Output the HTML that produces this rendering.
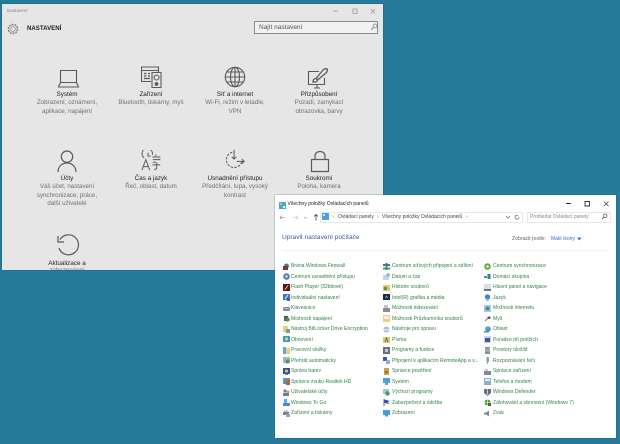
<!DOCTYPE html>
<html lang="cs"><head><meta charset="utf-8"><title>Nastavení</title>
<style>
html,body{margin:0;padding:0}
body{width:620px;height:444px;overflow:hidden;position:relative;background:#267a9a;font-family:"Liberation Sans",sans-serif}
div,span,svg{position:absolute}
#s{left:2px;top:4px;width:381px;height:266px;background:#e6e6e6;overflow:hidden;box-shadow:0 0 1px #14506a;filter:blur(.2px)}
.t{white-space:nowrap;text-align:center;width:84px;font-size:6.3px;line-height:9px;color:#222}
.d{white-space:pre;text-align:center;width:84px;font-size:6.2px;line-height:8.6px;color:#707070}
.i{fill:none;stroke:#5a5a5a;stroke-width:1.1}
#c{left:275px;top:195px;width:341px;height:243px;background:#fff;overflow:hidden;box-shadow:0 0 1px #14506a;filter:blur(.2px)}
.l{white-space:nowrap;font-size:5.05px;line-height:8px;color:#2f8348}
.ic{width:7px;height:7px}
</style></head><body>
<div id="s">
<div style="left:5px;top:3px;font-size:4.6px;line-height:8px;color:#8a8a8a">Nastavení</div>
<svg style="left:328px;top:2px;width:50px;height:10px" viewBox="0 0 50 10"><path d="M3 5h5M23 3h4v4.500h-4zM41 3l4 4.500M45 3l-4 4.500" fill="none" stroke="#9a9a9a" stroke-width=".8"/></svg>
<svg style="left:3.500px;top:18px;width:14px;height:14px" viewBox="0 0 14 14"><circle cx="7" cy="7" r="2.300" fill="none" stroke="#777" stroke-width=".6"/><circle cx="7" cy="7" r="4.800" fill="none" stroke="#777" stroke-width="1" stroke-dasharray="1.800 1.200"/><circle cx="7" cy="7" r="4" fill="none" stroke="#888" stroke-width=".5"/></svg>
<div style="left:25px;top:19.500px;font-size:6.100px;line-height:10px;font-weight:bold;color:#222">NASTAVENÍ</div>
<div style="left:252px;top:17px;width:122px;height:11px;background:#f1f1f1;border:1px solid #8a8a8a"></div>
<div style="left:257px;top:19px;font-size:6.500px;line-height:9px;color:#555">Najít nastavení</div>
<svg style="left:368px;top:19px;width:8px;height:8px" viewBox="0 0 8 8"><circle cx="5" cy="3" r="2" fill="none" stroke="#777" stroke-width=".7"/><path d="M3.500 4.500L1 7" stroke="#777" stroke-width=".8"/></svg>

<svg class="i" style="left:55px;top:65px;width:24px;height:22px" viewBox="0 0 24 22"><path d="M3.500 1.500h16v12h-16zM3.500 13.500L1.500 18h20l-2-4.500"/></svg>
<div class="t" style="left:23px;top:86px">Systém</div>
<div class="d" style="left:23px;top:95px">Zobrazení, oznámení,
aplikace, napájení</div>

<svg class="i" style="left:139px;top:62px;width:22px;height:23px" viewBox="0 0 22 23"><path d="M10 15.500H.5V1h17v5M.5 4.500h17M11 6.500h9v15h-9z"/><circle cx="15.500" cy="11.500" r="2.500"/><circle cx="15.500" cy="18" r="1.300" fill="#5a5a5a"/><path d="M3 7.500h2.500M7 7.500h2M3 10h2.500M7 10h2M3 12.500h6" stroke-width="1.200"/></svg>
<div class="t" style="left:107px;top:86px">Zařízení</div>
<div class="d" style="left:97px;top:95px;width:104px">Bluetooth, tiskárny, myš</div>

<svg class="i" style="left:221px;top:60.500px;width:24px;height:24px" viewBox="0 0 24 24"><circle cx="12" cy="12" r="9.700"/><ellipse cx="12" cy="12" rx="4.500" ry="9.700"/><path d="M12 2.300v19.400M2.300 12h19.400M3.800 7h16.400M3.800 17h16.400"/></svg>
<div class="t" style="left:191px;top:86px">Síť a internet</div>
<div class="d" style="left:191px;top:95px">Wi-Fi, režim v letadle,
VPN</div>

<svg class="i" style="left:304px;top:63px;width:24px;height:24px" viewBox="0 0 24 24"><path d="M13 4.500H2.500v13h16V11M8 21h6M11 17.500V21"/><path d="M7 15c0-3 2-3.500 3-3.500l1.500 1.500c0 1-1 2.500-4.500 2zM10 11.500L17 3c1-1 3-2 4-1s0 3-1 4l-8.500 7" stroke-width="1.300"/></svg>
<div class="t" style="left:275px;top:86px">Přizpůsobení</div>
<div class="d" style="left:275px;top:95px">Pozadí, zamykací
obrazovka, barvy</div>

<svg class="i" style="left:55px;top:146px;width:20px;height:24px" viewBox="0 0 20 24"><circle cx="10" cy="6.700" r="5.700" stroke-width="1.200"/><path d="M1 22c0-5 3.500-9 9-9s9 4 9 9" stroke-width="1.200"/></svg>
<div class="t" style="left:23px;top:170px">Účty</div>
<div class="d" style="left:23px;top:179px">Váš účet, nastavení
synchronizace, práce,
další uživatelé</div>

<svg class="i" style="left:139px;top:146px;width:21px;height:21px" viewBox="0 0 24 24"><path d="M3.500 9A6 6 0 1 1 13 5.500"/><path d="M8 3v4h3M1 23L5.500 11 10 23M2.500 19h6M13 8h9M17 5v2M13.500 11h8v-1M17 14h-3.500M13 17h9M18 14v6c0 2-1 2-3 2"/></svg>
<div class="t" style="left:107px;top:170px">Čas a jazyk</div>
<div class="d" style="left:107px;top:179px">Řeč, oblast, datum</div>

<svg class="i" style="left:222px;top:145px;width:22px;height:22px" viewBox="0 0 24 22"><path d="M9 2.500A8.500 8.500 0 1 0 19.500 12" stroke-dasharray="2.600 1.500"/><path d="M11 0v10M8.500 7.500L11 10l2.500-2.500M14 12.500h8M19.500 10l2.500 2.500-2.500 2.500"/></svg>
<div class="t" style="left:191px;top:170px">Usnadnění přístupu</div>
<div class="d" style="left:191px;top:179px">Předčítání, lupa, vysoký
kontrast</div>

<svg class="i" style="left:308px;top:145.500px;width:20px;height:23px" viewBox="0 0 20 23"><path d="M1.500 9.500h17v12h-17zM5 9.500V6c0-6 10-6 10 0v3.500" stroke-width="1.200"/></svg>
<div class="t" style="left:275px;top:170px">Soukromí</div>
<div class="d" style="left:275px;top:179px">Poloha, kamera</div>

<svg class="i" style="left:54px;top:229px;width:24px;height:24px" viewBox="0 0 24 24"><path d="M4 6.500A10 10 0 1 1 3 15" stroke-width="1.200"/><path d="M2 3v6h6" stroke-width="1.200"/></svg>
<div class="t" style="left:23px;top:255px">Aktualizace a</div>
<div class="d" style="left:23px;top:263px">zabezpečení</div>
</div>

<div id="c">
<svg style="left:4px;top:7px;width:7px;height:7px" viewBox="0 0 7 7"><rect width="7" height="7" fill="#4aa3d8"/><rect x="1" y="1" width="2" height="2" fill="#e8c35a"/><rect x="4" y="4" width="2" height="2" fill="#e8f4fb"/></svg>
<div style="left:12.500px;top:4.500px;font-size:5.050px;line-height:9px;color:#222">Všechny položky Ovládacích panelů</div>
<svg style="left:288px;top:4px;width:50px;height:9px" viewBox="0 0 50 9"><path d="M3 4.500h5M22 2.500h4.500V7H22z" fill="none" stroke="#333" stroke-width=".9"/><path d="M41 2.500L45.500 7M45.500 2.500L41 7" stroke="#444" stroke-width=".8"/></svg>
<svg style="left:4px;top:17.500px;width:44px;height:9px" viewBox="0 0 44 9"><path d="M1 4.500h5M3 2.500L1 4.500l2 2" fill="none" stroke="#999" stroke-width=".8"/><path d="M14 4.500h5M17 2.500l2 2-2 2" fill="none" stroke="#ccc" stroke-width=".8"/><path d="M25 4l1.500 1.500L28 4" fill="none" stroke="#aaa" stroke-width=".7"/><path d="M37 7.500v-6M35 3.500l2-2 2 2" fill="none" stroke="#444" stroke-width=".8"/></svg>
<div style="left:45px;top:17px;width:201px;height:9px;border:1px solid #e8e8e8"></div>
<svg style="left:47px;top:18px;width:7px;height:7px" viewBox="0 0 7 7"><rect width="7" height="7" fill="#4aa3d8"/><rect x="1" y="1" width="2" height="2" fill="#cfe8f7"/></svg>
<div style="left:57px;top:17.500px;font-size:5px;line-height:9px;color:#777">›</div>
<div style="left:63px;top:17.500px;font-size:5px;line-height:9px;color:#444;white-space:nowrap">Ovládací panely</div>
<div style="left:102px;top:17.500px;font-size:5px;line-height:9px;color:#777">›</div>
<div style="left:107px;top:17.500px;font-size:5px;line-height:9px;color:#444;white-space:nowrap">Všechny položky Ovládacích panelů</div>
<div style="left:191px;top:17.500px;font-size:5px;line-height:9px;color:#777">›</div>
<svg style="left:230px;top:18px;width:16px;height:8px" viewBox="0 0 16 8"><path d="M1 3l2 2 2-2" fill="none" stroke="#666" stroke-width=".7"/><path d="M13 2.500A2 2 0 1 0 14 4" fill="none" stroke="#666" stroke-width=".7"/></svg>
<div style="left:252px;top:17px;width:82px;height:9px;border:1px solid #e8e8e8"></div>
<div style="left:255px;top:17.500px;font-size:5px;line-height:9px;color:#888;white-space:nowrap">Prohledat Ovládací panely</div>
<svg style="left:326px;top:18px;width:7px;height:7px" viewBox="0 0 7 7"><circle cx="4.200" cy="2.800" r="1.800" fill="none" stroke="#555" stroke-width=".7"/><path d="M3 4L1 6" stroke="#555" stroke-width=".8"/></svg>
<div style="left:7px;top:38px;font-size:6.550px;line-height:10px;color:#3a5aa8;white-space:nowrap">Upravit nastavení počítače</div>
<div style="left:237px;top:39.500px;font-size:5.150px;line-height:9px;color:#666;white-space:nowrap">Zobrazit podle:</div>
<div style="left:276px;top:39.500px;font-size:5px;line-height:9px;color:#2f72d4;white-space:nowrap">Malé ikony</div>
<svg style="left:302px;top:42px;width:5px;height:4px" viewBox="0 0 5 4"><path d="M0 .5h4.500L2.200 3.500z" fill="#2f78c4"/></svg>
<div style="left:7px;top:55px;width:328px;height:1px;background:#eef0f4"></div>

<svg class="ic" style="left:8px;top:67.500px" viewBox="0 0 7 7"><circle cx="3.500" cy="3" r="2.500" fill="#3f78b4"/><rect y="3" width="5" height="4" fill="#7a3b20"/></svg><div class="l" style="left:16px;top:67px">Brána Windows Firewall</div>
<svg class="ic" style="left:8px;top:78px" viewBox="0 0 7 7"><circle cx="3.500" cy="3.500" r="3.300" fill="#4c7fc4"/><circle cx="3.500" cy="3.500" r="1.200" fill="#d9e6f5"/></svg><div class="l" style="left:16px;top:77.500px">Centrum usnadnění přístupu</div>
<svg class="ic" style="left:8px;top:88.500px" viewBox="0 0 7 7"><rect width="7" height="7" fill="#5a1014"/><path d="M1.500 5.500C3.500 5.500 3.500 1.500 5.500 1.500" stroke="#eee" fill="none" stroke-width=".8"/></svg><div class="l" style="left:16px;top:88px">Flash Player (32bitové)</div>
<svg class="ic" style="left:8px;top:99px" viewBox="0 0 7 7"><rect width="7" height="6" fill="#3a78c8"/><path d="M2 5l3-4" stroke="#fff" stroke-width=".8"/><rect x="4" y="4" width="3" height="3" fill="#7a3fa0"/></svg><div class="l" style="left:16px;top:98.500px">Individuální nastavení</div>
<svg class="ic" style="left:8px;top:109.500px" viewBox="0 0 7 7"><rect y="2" width="7" height="4" rx="1" fill="#8a8f96"/><path d="M1 3.500h5" stroke="#dde" stroke-width=".5"/></svg><div class="l" style="left:16px;top:109px">Klávesnice</div>
<svg class="ic" style="left:8px;top:120px" viewBox="0 0 7 7"><rect x="1" y="1" width="4" height="5" fill="#555"/><circle cx="4.500" cy="4.500" r="2.200" fill="#4c9a3c"/></svg><div class="l" style="left:16px;top:119.500px">Možnosti napájení</div>
<svg class="ic" style="left:8px;top:130.500px" viewBox="0 0 7 7"><rect width="5" height="6" fill="#e8cf7c"/><rect x="3" y="3" width="4" height="4" fill="#8a94a8"/></svg><div class="l" style="left:16px;top:130px">Nástroj BitLocker Drive Encryption</div>
<svg class="ic" style="left:8px;top:141px" viewBox="0 0 7 7"><rect width="7" height="6" rx="1" fill="#3f8fc4"/><circle cx="3.500" cy="3" r="1.700" fill="#a8d8a0"/></svg><div class="l" style="left:16px;top:140.500px">Obnovení</div>
<svg class="ic" style="left:8px;top:151.500px" viewBox="0 0 7 7"><rect y="1" width="7" height="6" fill="#f0d070"/><rect width="3" height="7" fill="#5ea8dc"/></svg><div class="l" style="left:16px;top:151px">Pracovní složky</div>
<svg class="ic" style="left:8px;top:162px" viewBox="0 0 7 7"><rect width="7" height="6" fill="#a9b3bb"/><circle cx="4.500" cy="4.500" r="2" fill="#46a04a"/></svg><div class="l" style="left:16px;top:161.500px">Přehrát automaticky</div>
<svg class="ic" style="left:8px;top:172.500px" viewBox="0 0 7 7"><rect width="7" height="6" fill="#3c4aa0"/><circle cx="3.500" cy="3" r="1.500" fill="#e8d060"/><rect x="2" y="6" width="3" height="1" fill="#888"/></svg><div class="l" style="left:16px;top:172px">Správa barev</div>
<svg class="ic" style="left:8px;top:183px" viewBox="0 0 7 7"><rect width="7" height="6" fill="#5a94c8"/><rect x="3" y="2" width="4" height="5" fill="#c06030"/></svg><div class="l" style="left:16px;top:182.500px">Správce zvuku Realtek HD</div>
<svg class="ic" style="left:8px;top:193.500px" viewBox="0 0 7 7"><circle cx="2" cy="2" r="1.600" fill="#5a84a8"/><circle cx="5" cy="3" r="1.500" fill="#c8a468"/><rect y="4" width="6" height="3" fill="#6f7f8f"/></svg><div class="l" style="left:16px;top:193px">Uživatelské účty</div>
<svg class="ic" style="left:8px;top:204px" viewBox="0 0 7 7"><rect x="1" width="3" height="4" fill="#5ab0e0"/><rect y="4" width="7" height="3" fill="#4a8fc8"/></svg><div class="l" style="left:16px;top:203.500px">Windows To Go</div>
<svg class="ic" style="left:8px;top:214.500px" viewBox="0 0 7 7"><rect y="2" width="6" height="3" fill="#7a8088"/><rect x="1" width="4" height="2" fill="#c8ccd0"/><rect x="3" y="4" width="4" height="3" fill="#9aa4ac"/></svg><div class="l" style="left:16px;top:214px">Zařízení a tiskárny</div>

<svg class="ic" style="left:108px;top:67.500px" viewBox="0 0 7 7"><rect x="2.500" width="2" height="7" fill="#2f8f4f"/><rect y="1" width="7" height="2" fill="#3f74c0"/><rect y="4.500" width="7" height="2" fill="#3f9f5a"/></svg><div class="l" style="left:117px;top:67px">Centrum síťových připojení a sdílení</div>
<svg class="ic" style="left:108px;top:78px" viewBox="0 0 7 7"><rect y="2" width="6" height="5" fill="#c8d4de"/><circle cx="5" cy="2" r="2" fill="#8fc4e8"/></svg><div class="l" style="left:117px;top:77.500px">Datum a čas</div>
<svg class="ic" style="left:108px;top:88.500px" viewBox="0 0 7 7"><rect y="1" width="7" height="6" fill="#ecc860"/><circle cx="2.500" cy="4.500" r="1.800" fill="#3f9f5a"/></svg><div class="l" style="left:117px;top:88px">Historie souborů</div>
<svg class="ic" style="left:108px;top:99px" viewBox="0 0 7 7"><rect width="7" height="6" fill="#1a2a3a"/><path d="M2 4l1.500-2L5 4" stroke="#7fc4e8" fill="none" stroke-width=".7"/></svg><div class="l" style="left:117px;top:98.500px">Intel(R) grafika a média</div>
<svg class="ic" style="left:108px;top:109.500px" viewBox="0 0 7 7"><rect x="1" width="4" height="4" fill="#c0c4c8"/><rect y="3" width="7" height="4" fill="#8a9098"/></svg><div class="l" style="left:117px;top:109px">Možnosti indexování</div>
<svg class="ic" style="left:108px;top:120px" viewBox="0 0 7 7"><rect width="7" height="7" fill="#eccf80"/><rect x="1" y="1" width="5" height="3" fill="#e8eef4"/></svg><div class="l" style="left:117px;top:119.500px">Možnosti Průzkumníka souborů</div>
<svg class="ic" style="left:108px;top:130.500px" viewBox="0 0 7 7"><circle cx="3.500" cy="3.500" r="3" fill="#b0b8c0"/><rect x="1" y="3" width="6" height="1.500" fill="#e4e8ec"/></svg><div class="l" style="left:117px;top:130px">Nástroje pro správu</div>
<svg class="ic" style="left:108px;top:141px" viewBox="0 0 7 7"><rect y="1" width="7" height="6" fill="#f0c850"/><path d="M2 6l1.500-4L5 6" stroke="#2f6fc0" fill="none"/></svg><div class="l" style="left:117px;top:140.500px">Písma</div>
<svg class="ic" style="left:108px;top:151.500px" viewBox="0 0 7 7"><rect width="7" height="7" fill="#6a7078"/><circle cx="3.500" cy="3.500" r="1.600" fill="#d0d4d8"/></svg><div class="l" style="left:117px;top:151px">Programy a funkce</div>
<svg class="ic" style="left:108px;top:162px" viewBox="0 0 7 7"><rect width="4" height="4" fill="#3c5ab0"/><rect x="3" y="3" width="4" height="4" fill="#8ab0d8"/></svg><div class="l" style="left:117px;top:161.500px">Připojení k aplikacím RemoteApp a v...</div>
<svg class="ic" style="left:108px;top:172.500px" viewBox="0 0 7 7"><rect x="1" width="5" height="7" fill="#c8a050"/><rect x="2" y="3" width="3" height="2" fill="#8a7040"/></svg><div class="l" style="left:117px;top:172px">Správce pověření</div>
<svg class="ic" style="left:108px;top:183px" viewBox="0 0 7 7"><rect width="7" height="5" fill="#4aa3d8"/><rect x="2" y="5" width="3" height="2" fill="#8a98a8"/></svg><div class="l" style="left:117px;top:182.500px">Systém</div>
<svg class="ic" style="left:108px;top:193.500px" viewBox="0 0 7 7"><rect width="6" height="5" fill="#a8c4dc"/><circle cx="4.500" cy="4.500" r="2.200" fill="#3f9f4a"/></svg><div class="l" style="left:117px;top:193px">Výchozí programy</div>
<svg class="ic" style="left:108px;top:204px" viewBox="0 0 7 7"><path d="M1 0v7" stroke="#444" stroke-width=".8"/><path d="M1.500 .5L7 2 4.500 3 7 5 1.500 4z" fill="#2f4fb0"/></svg><div class="l" style="left:117px;top:203.500px">Zabezpečení a údržba</div>
<svg class="ic" style="left:108px;top:214.500px" viewBox="0 0 7 7"><rect width="7" height="5" fill="#3f9fdc"/><rect x="2" y="5" width="3" height="1.500" fill="#7a8a9a"/></svg><div class="l" style="left:117px;top:214px">Zobrazení</div>

<svg class="ic" style="left:209px;top:67.500px" viewBox="0 0 7 7"><circle cx="3.500" cy="3.500" r="3.300" fill="#5ab03c"/><circle cx="3.500" cy="3.500" r="1.400" fill="#d8efc8"/></svg><div class="l" style="left:218px;top:67px">Centrum synchronizace</div>
<svg class="ic" style="left:209px;top:78px" viewBox="0 0 7 7"><rect x="3.500" y="1" width="3" height="5" fill="#2f7fb8"/><rect y="3" width="3" height="2" fill="#3f9f5a"/></svg><div class="l" style="left:218px;top:77.500px">Domácí skupina</div>
<svg class="ic" style="left:209px;top:88.500px" viewBox="0 0 7 7"><rect width="7" height="5" fill="#d8dfe6"/><rect y="5" width="7" height="2" fill="#5a7a98"/></svg><div class="l" style="left:218px;top:88px">Hlavní panel a navigace</div>
<svg class="ic" style="left:209px;top:99px" viewBox="0 0 7 7"><circle cx="3.500" cy="3" r="2.700" fill="#3f88c8"/><path d="M2 7l1.500-3L5 7" fill="#7fb8e0"/></svg><div class="l" style="left:218px;top:98.500px">Jazyk</div>
<svg class="ic" style="left:209px;top:109.500px" viewBox="0 0 7 7"><rect width="7" height="7" fill="#a8c8dc"/><circle cx="3.500" cy="3.500" r="2" fill="#3f88b8"/></svg><div class="l" style="left:218px;top:109px">Možnosti internetu</div>
<svg class="ic" style="left:209px;top:120px" viewBox="0 0 7 7"><path d="M1 6L4 3" stroke="#8a8a8a" stroke-width="1.200"/><rect x="3.500" y="1.500" width="3" height="2.500" rx="1" fill="#555"/></svg><div class="l" style="left:218px;top:119.500px">Myš</div>
<svg class="ic" style="left:209px;top:130.500px" viewBox="0 0 7 7"><circle cx="4" cy="3" r="2.800" fill="#3f98c8"/><circle cx="4" cy="2" r="1" fill="#7ac05a"/><rect y="5" width="5" height="1.500" fill="#5a88a8"/></svg><div class="l" style="left:218px;top:130px">Oblast</div>
<svg class="ic" style="left:209px;top:141px" viewBox="0 0 7 7"><rect width="7" height="7" fill="#c8d4e0"/><rect x="1" y="2" width="5" height="4" fill="#3c5a90"/></svg><div class="l" style="left:218px;top:140.500px">Poradce při potížích</div>
<svg class="ic" style="left:209px;top:151.500px" viewBox="0 0 7 7"><rect x="1" width="5" height="7" fill="#8a9098"/><path d="M1 2h5M1 4h5" stroke="#ddd" stroke-width=".6"/></svg><div class="l" style="left:218px;top:151px">Prostory úložišť</div>
<svg class="ic" style="left:209px;top:162px" viewBox="0 0 7 7"><rect x="2.500" width="2.500" height="5" rx="1" fill="#8a98a8"/><path d="M3.700 5v2" stroke="#667" stroke-width=".7"/></svg><div class="l" style="left:218px;top:161.500px">Rozpoznávání řeči</div>
<svg class="ic" style="left:209px;top:172.500px" viewBox="0 0 7 7"><rect y="3" width="7" height="4" fill="#7f8a94"/><rect x="1" y="1" width="3" height="2" fill="#c4ccd4"/></svg><div class="l" style="left:218px;top:172px">Správce zařízení</div>
<svg class="ic" style="left:209px;top:183px" viewBox="0 0 7 7"><rect width="7" height="7" fill="#8ab0cc"/><rect x="1" y="1" width="5" height="2" fill="#e4eef4"/></svg><div class="l" style="left:218px;top:182.500px">Telefon a modem</div>
<svg class="ic" style="left:209px;top:193.500px" viewBox="0 0 7 7"><path d="M0 0h7v4L3.500 7 0 4z" fill="#6a7078"/><rect x="3" width="1" height="6" fill="#c8ccd0"/></svg><div class="l" style="left:218px;top:193px">Windows Defender</div>
<svg class="ic" style="left:209px;top:204px" viewBox="0 0 7 7"><circle cx="3.500" cy="3.500" r="3" fill="#3f9f3a"/><path d="M3.500 0v7M0 3.500h7" stroke="#fff" stroke-width=".6"/><rect x="4" y="4" width="3" height="3" fill="#6a5a3a"/></svg><div class="l" style="left:218px;top:203.500px">Zálohování a obnovení (Windows 7)</div>
<svg class="ic" style="left:209px;top:214.500px" viewBox="0 0 7 7"><path d="M0 2.500h2L5 .5v6l-3-2H0z" fill="#7a8a98"/></svg><div class="l" style="left:218px;top:214px">Zvuk</div>
</div>
</body></html>
